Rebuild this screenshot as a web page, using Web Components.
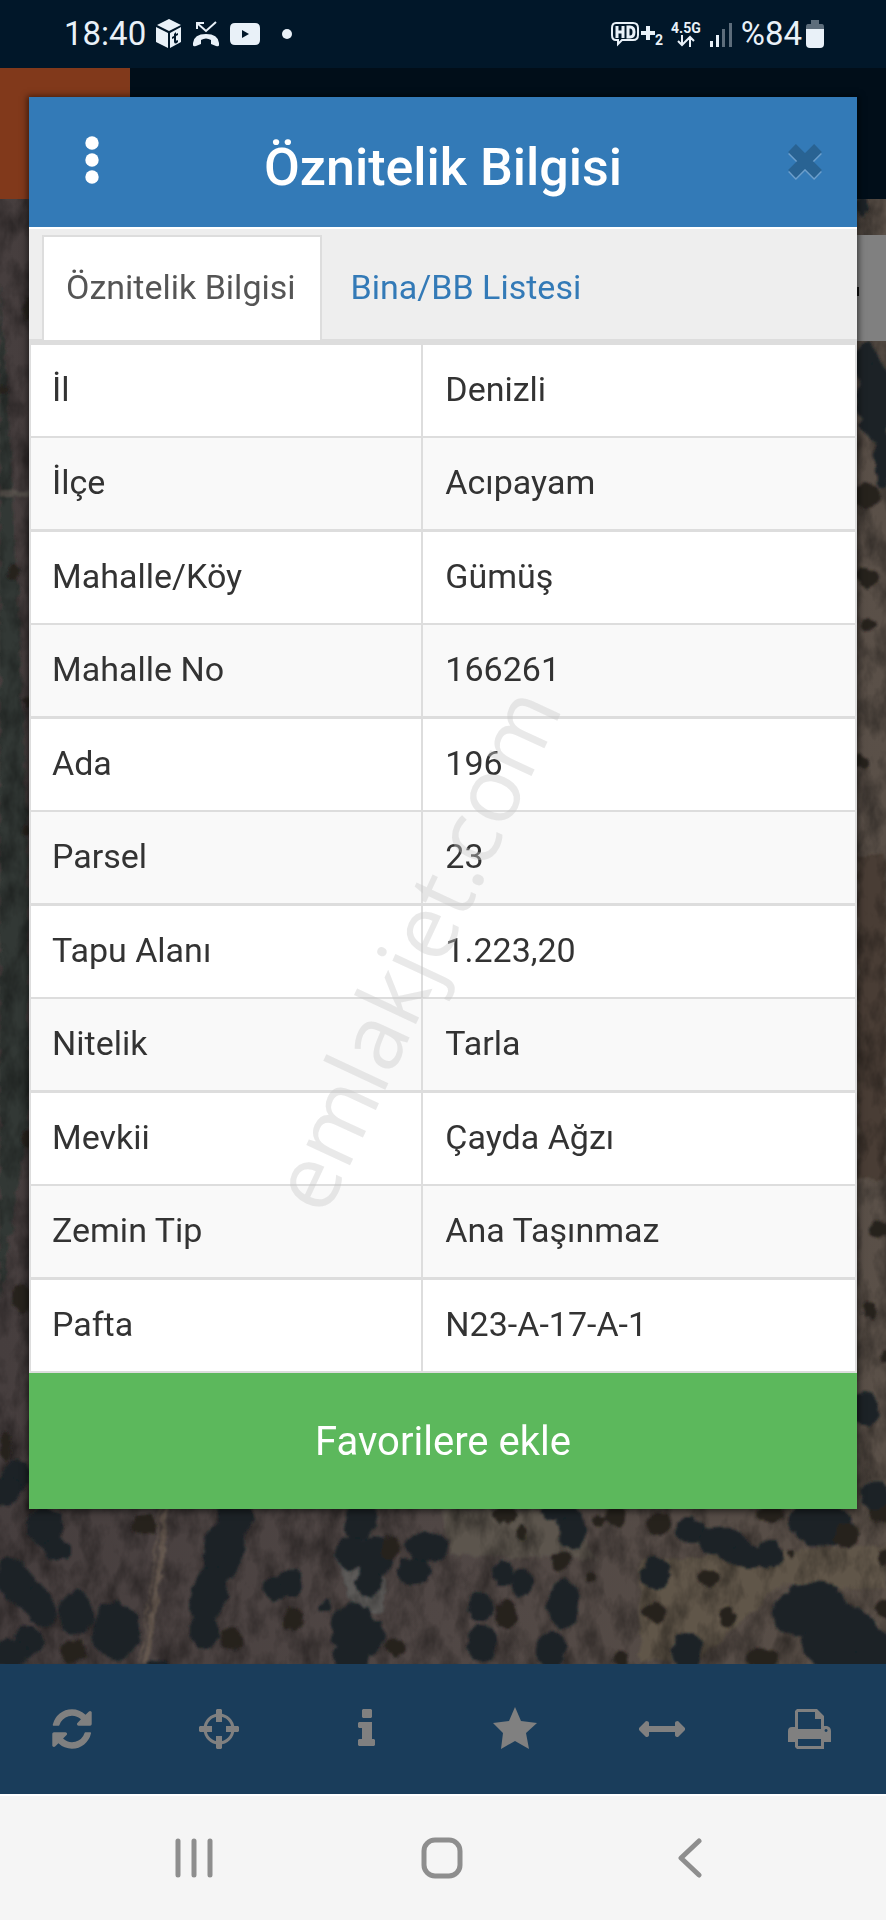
<!DOCTYPE html>
<html lang="tr">
<head>
<meta charset="utf-8">
<meta name="viewport" content="width=device-width, initial-scale=1">
<title>Öznitelik Bilgisi</title>
<style>
    body {
        margin: 0;
        font-family: Roboto, "Noto Sans", sans-serif;
    }
</style>
</head>
<body>
<parcel-app></parcel-app>

<script>
const define = (name, html, setup) => {
    const template = document.createElement('template')
    template.innerHTML = html
    customElements.define(name, class extends HTMLElement {
        constructor() {
            super()
            const shadow = this.attachShadow({mode: 'open'})
            shadow.appendChild(template.content.cloneNode(true))
            if (setup) setup(shadow, this)
        }
    })
}

// phone status bar
define('status-bar', `
    <style>
    :host {
        display: flex;
        align-items: center;
        justify-content: space-between;
        height: 68px;
        padding: 0 62px 0 64px;
        box-sizing: border-box;
        background: #011729;
        color: #e9f1f8;
        font-size: 33px;
        line-height: 40px;
    }
    div { display: flex; align-items: center; }
    svg { display: block; fill: currentColor; }
    .left { gap: 10px; }
    .right { gap: 8px; }
    .net {
        font: bold 14px/14px Roboto, sans-serif;
        flex-direction: column;
    }
    .sim { font: bold 14px/14px Roboto, sans-serif; align-self: flex-end; }
    .volte { gap: 0; }
    .battery { gap: 4px; }
    </style>
    <div class="left">
        <span>18:40</span>
        <svg width="26" height="30" viewBox="0 0 26 30">
            <path d="M13 0 25 6 13 12 1 6Z"/>
            <path d="M0 8 12 14V29L0 23Z"/>
            <path fill-rule="evenodd" d="M14 14 25 8V23L14 29ZM18 15v2l-2 1v2l2-1v4q1 3 4 0v-2q-2 1-2 0v-4l2-1v-2l-2 1v-2Z"/>
        </svg>
        <svg width="28" height="28" viewBox="0 0 28 28">
            <path d="M5 9V3h7M5 3l9 8L24 2" fill="none" stroke="currentColor" stroke-width="2"/>
            <path d="M1 23Q2 14 14 14T27 23V25Q27 27 24 26L19 24V20Q14 17 9 20V24L4 26Q1 27 1 25Z"/>
        </svg>
        <svg width="30" height="22" viewBox="0 0 30 22">
            <path fill-rule="evenodd" d="M5 0Q15-1 25 0Q30 0 30 5V17Q30 22 25 22Q15 23 5 22Q0 22 0 17V5Q0 0 5 0ZM12 7V15L19 11Z"/>
        </svg>
        <svg width="34" height="12" viewBox="0 0 34 12"><circle cx="17" cy="6" r="5"/></svg>
    </div>
    <div class="right">
        <div class="volte">
            <svg width="44" height="26" viewBox="0 0 44 26">
                <path d="M5 2H22Q27 2 27 7V14Q27 19 22 19H11L7 23V19H5Q1 19 1 14V7Q1 2 5 2Z" fill="none" stroke="currentColor" stroke-width="2"/>
                <path d="M6 5V17M12 5V17M6 11H12M17 6V16H19Q23 16 23 11T19 6Z" fill="none" stroke="currentColor" stroke-width="3"/>
                <path d="M35 5h4v5h5v4h-5v5h-4v-5h-5v-4h5Z"/>
            </svg>
            <span class="sim">2</span>
        </div>
        <div class="net">
            4.5G
            <svg width="18" height="12" viewBox="0 0 18 12">
                <path d="M5 0V10M1 6 5 10 9 6M13 12V2M9 6 13 2 17 6" fill="none" stroke="currentColor" stroke-width="2"/>
            </svg>
        </div>
        <svg width="24" height="26" viewBox="0 0 24 26">
            <path d="M1 20h3v6H1ZM7 14h3v12H7Z"/>
            <path d="M13 8h3v18h-3ZM20 2h3v24h-3Z" opacity=".4"/>
        </svg>
        <div class="battery">
            <span>%84</span>
            <svg width="18" height="28" viewBox="0 0 18 28">
                <path d="M5 0h8v4h3q2 0 2 3v2H0V7q0-3 2-3h3Z" opacity=".4"/>
                <path d="M0 9h18v15q0 4-4 4H4q-4 0-4-4Z"/>
            </svg>
        </div>
    </div>
`)

// darkened aerial photo behind the dialog: fields, tracks, trees
define('aerial-map', `
    <style>
    :host { display: block; overflow: hidden; contain: size; background: #453f3c; }
    svg { display: block; width: 100%; height: 100%; }
    </style>
    <svg viewBox="0 68 886 1596" preserveAspectRatio="xMidYMid slice" aria-hidden="true">
        <defs>
            <linearGradient id="soil">
                <stop offset="0" stop-color="#463e3e"/>
                <stop offset=".5" stop-color="#504745"/>
                <stop offset="1" stop-color="#5a5048"/>
            </linearGradient>
            <filter id="rough" x="-5%" y="-5%" width="110%" height="110%">
                <feTurbulence type="fractalNoise" baseFrequency=".08" numOctaves="3" seed="4"/>
                <feDisplacementMap in="SourceGraphic" scale="10" xChannelSelector="R" yChannelSelector="G"/>
                <feGaussianBlur stdDeviation="1"/>
            </filter>
            <filter id="grain" x="0" y="0" width="100%" height="100%">
                <feTurbulence type="fractalNoise" baseFrequency=".05 .03" numOctaves="4" seed="9"/>
                <feColorMatrix values="0 0 0 0 0  0 0 0 0 0  0 0 0 0 0  1.6 0 0 0 -.6"/>
            </filter>
        </defs>
        <rect y="68" width="886" height="1596" fill="url(#soil)"/>
        <g filter="url(#rough)">
            <path d="M0 280 8 400 22 690 29 900V1120L0 1300Z" fill="#303734"/>
            <path d="M0 494H30" stroke="#5b5651" stroke-width="6"/>
            <path d="M857 855H886V1180H857Z" fill="#4a3d36"/>
            <path d="M165 1500Q158 1580 143 1664" stroke="#655950" stroke-width="10" fill="none"/>
            <path d="M163 1500Q156 1580 141 1664" stroke="#4b4240" stroke-width="3" fill="none"/>
            <path d="M443 1510H560L600 1560 450 1555Z" fill="#5b544d"/>
            <path d="M640 1560 886 1545V1590L780 1585 700 1660H640Z" fill="#615649"/>
            <path d="M335 1555 350 1600 345 1625 385 1610 385 1580Z" fill="#5b5a59"/>
        </g>
        <rect y="68" width="886" height="1596" filter="url(#grain)" opacity=".5"/>
        <g id="trees" filter="url(#rough)"></g>
        <path d="M857 235H886V341H857Z" fill="#808080"/>
        <path d="M857 287H859V296H857Z" fill="#111"/>
    </svg>
`, shadow => {
    // cx, cy, rx, ry, rotation
    const trees = [
        [44,1527,18,20,0], [55,1549,14,11,0], [15,1582,18,26,-30], [38,1605,15,22,-25], [75,1612,17,22,0],
        [115,1630,24,28,0], [27,1640,15,16,0], [8,1654,18,14,0], [72,1650,13,11,1], [143,1523,13,10,1],
        [234,1514,18,22,0], [222,1552,20,32,12], [208,1594,18,30,10], [203,1630,15,18,0], [231,1638,12,11,1],
        [275,1588,13,12,0], [290,1581,12,14,0], [292,1618,10,11,1], [360,1520,16,20,25], [350,1552,16,16,0],
        [372,1557,18,22,0], [368,1582,12,14,0], [389,1547,10,12,1], [426,1546,20,16,0], [412,1570,16,14,0],
        [352,1628,22,26,0], [372,1635,12,18,0], [350,1655,18,18,0], [395,1646,10,9,1], [326,1605,6,5,0],
        [503,1514,12,10,1], [520,1531,7,7,1], [570,1527,14,22,0], [556,1508,16,10,0], [559,1560,9,9,1],
        [502,1573,11,13,0], [521,1582,10,14,0], [589,1576,5,5,1], [656,1524,12,11,1], [615,1515,11,10,1],
        [599,1520,6,6,1], [655,1573,15,16,0], [655,1611,12,10,1], [708,1577,12,9,1], [563,1603,16,24,0],
        [480,1605,13,14,0], [506,1614,12,14,1], [481,1642,13,19,0], [550,1648,15,20,0], [690,1530,15,12,0],
        [725,1544,28,15,15], [745,1555,16,14,0], [769,1553,14,14,0], [789,1553,3,4,1], [820,1523,32,22,10],
        [845,1534,12,12,1], [725,1617,8,11,1], [686,1650,15,20,0], [762,1658,16,10,1],
        [808,1608,38,26,-15], [840,1638,38,34,0], [874,1650,20,22,0], [884,1608,8,9,1], [770,1512,14,8,1],
        [620,1658,8,9,1], [155,1664,10,5,0], [883,1555,5,8,1], [880,1510,12,12,1],
        [27,308,5,10,1], [3,388,6,4,1], [12,572,6,7,1], [26,700,4,5,1], [27,830,4,6,1],
        [25,1138,6,7,1], [22,1298,11,14,1], [5,1445,6,14,1], [16,1474,14,15,0], [4,1490,16,14,0],
        [860,205,5,10,0], [864,362,12,22,0], [874,400,18,40,0], [882,455,8,32,0], [866,495,14,12,1],
        [866,576,11,10,1], [868,624,9,5,1], [860,760,6,8,1], [878,1228,10,9,1], [869,1310,8,9,1],
        [885,1355,4,6,1], [864,1408,14,16,0], [874,1494,14,14,0]
    ]
    const ns = 'http://www.w3.org/2000/svg'
    const group = shadow.getElementById('trees')
    trees.forEach(([cx, cy, rx, ry, kind]) => {
        const tree = document.createElementNS(ns, 'ellipse')
        tree.setAttribute('cx', cx + 1)
        tree.setAttribute('cy', cy + 1)
        tree.setAttribute('rx', rx)
        tree.setAttribute('ry', ry)
        // 1 marks the small, brownish ones, anything else is an angle
        tree.setAttribute('fill', kind === 1 ? '#26221f' : '#1a2327')
        if (kind !== 1) tree.setAttribute('transform', `rotate(${kind} ${cx} ${cy})`)
        group.appendChild(tree)
    })
})

define('site-header', `
    <style>
    :host { display: block; height: 131px; background: #010e19; }
    div { width: 130px; height: 131px; background: #81391b; }
    </style>
    <div></div>
`)

define('info-dialog', `
    <style>
    :host {
        display: block;
        background: #fff;
        box-shadow: 0 1px 6px 2px rgba(0, 0, 0, .5);
    }
    header {
        display: grid;
        grid-template-columns: 125px 1fr 125px;
        align-items: center;
        height: 130px;
        background: #337ab7;
        color: #fff;
    }
    h1 {
        margin: 0;
        padding-top: 12px;
        font-size: 52px;
        font-weight: 500;
        line-height: 60px;
        text-align: center;
    }
    button {
        display: grid;
        place-items: center;
        height: 68px;
        padding: 0 0 4px;
        border: 0;
        background: none;
        color: inherit;
    }
    .close {
        justify-items: end;
        padding: 0 34px 0 0;
    }
    svg { display: block; }
    </style>
    <header>
        <button aria-label="Menü">
            <svg width="14" height="48" viewBox="0 0 14 48" fill="#fff">
                <circle cx="7" cy="7" r="6.700"/><circle cx="7" cy="24" r="6.700"/><circle cx="7" cy="41" r="6.700"/>
            </svg>
        </button>
        <h1><slot name="title"></slot></h1>
        <button class="close" aria-label="Kapat">
            <svg width="36" height="38" viewBox="0 0 36 38" fill="none" stroke-width="11">
                <path d="M5 7 31 33M31 7 5 33" stroke="#6d9fcc"/>
                <path d="M5 5 31 31M31 5 5 31" stroke="#296393"/>
            </svg>
        </button>
    </header>
    <slot></slot>
`)

define('tab-strip', `
    <style>
    :host {
        display: flex;
        align-items: flex-end;
        height: 115px;
        padding: 0 13px;
        box-sizing: border-box;
        border-top: 2px solid #fff;
        border-bottom: 3px solid #ddd;
        background: #eee;
    }
    ::slotted(a) {
        padding: 29px 24px 32px 22px;
        border: 2px solid transparent;
        border-bottom: 0;
        margin: 0 5px -1px 0;
        color: #337ab7;
        font-size: 34px;
        line-height: 42px;
        text-decoration: none;
    }
    ::slotted(a[aria-selected="true"]) {
        border-color: #ddd;
        background: #fff;
        color: #555;
    }
    </style>
    <slot></slot>
`)

define('attribute-table', `
    <style>
    :host { display: block; }
    table {
        width: 100%;
        border-collapse: separate;
        border-spacing: 0;
        border-right: 2px solid #ddd;
        border-bottom: 2px solid #ddd;
        table-layout: fixed;
        color: #333;
        font-size: 34px;
        line-height: 43px;
    }
    col { width: calc(100% * 19 / 40); }
    col + col { width: calc(100% * 21 / 40); }
    th, td {
        padding: 23px 22px 25px;
        border-left: 2px solid #ddd;
        border-top: 2px solid #ddd;
        font-weight: 400;
        text-align: left;
    }
    th { padding-left: 21px; }
    tr:nth-child(odd) > * { border-top-width: 3px; }
    tr:nth-child(even) > * { background: #f9f9f9; }
    </style>
    <table><colgroup><col><col></colgroup><tbody></tbody></table>
`, shadow => {
    const rows = [
        ['İl', 'Denizli'],
        ['İlçe', 'Acıpayam'],
        ['Mahalle/Köy', 'Gümüş'],
        ['Mahalle No', '166261'],
        ['Ada', '196'],
        ['Parsel', '23'],
        ['Tapu Alanı', '1.223,20'],
        ['Nitelik', 'Tarla'],
        ['Mevkii', 'Çayda Ağzı'],
        ['Zemin Tip', 'Ana Taşınmaz'],
        ['Pafta', 'N23-A-17-A-1']
    ]
    shadow.querySelector('tbody').innerHTML = rows
        .map(([name, value]) => `<tr><th scope="row">${name}</th><td>${value}</td></tr>`)
        .join('')
})

define('favorite-button', `
    <style>
    :host { display: block; }
    button {
        display: block;
        width: 100%;
        height: 136px;
        padding: 2px 0 0;
        border: 0;
        background: #5cb85c;
        color: #fff;
        font: 400 40px/48px Roboto, sans-serif;
    }
    </style>
    <button><slot></slot></button>
`)

define('water-mark', `
    <style>
    :host {
        position: absolute;
        inset: 0;
        display: grid;
        place-items: center;
        padding: 0 60px 24px 0;
        pointer-events: none;
    }
    span {
        color: rgba(200, 200, 200, .4);
        font: 90px/90px "Open Sans", "Noto Sans", sans-serif;
        transform: rotate(-65deg);
    }
    </style>
    <span><slot></slot></span>
`)

define('tool-bar', `
    <style>
    :host {
        display: grid;
        grid-template-columns: repeat(6, 1fr);
        height: 130px;
        background: #1a3d5b;
    }
    button {
        display: grid;
        place-items: center;
        padding: 0 4px 0 0;
        border: 0;
        background: none;
        color: #808080;
    }
    svg { display: block; fill: currentColor; }
    </style>
    <button aria-label="Yenile">
        <svg width="40" height="46" viewBox="0 0 1536 1792"><path d="M1511 1056q0 5-1 7-64 268-268 434.500t-478 166.500q-146 0-282.500-55t-243.500-157l-129 129q-19 19-45 19t-45-19-19-45v-448q0-26 19-45t45-19h448q26 0 45 19t19 45-19 45l-137 137q71 66 161 102t187 36q134 0 250-65t186-179q11-17 53-117 8-23 30-23h192q13 0 22.500 9.500t9.500 22.500zm25-800v448q0 26-19 45t-45 19h-448q-26 0-45-19t-19-45 19-45l138-138q-148-137-349-137-134 0-250 65t-186 179q-11 17-53 117-8 23-30 23h-199q-13 0-22.500-9.500t-9.500-22.500v-7q65-268 270-434.500t480-166.500q146 0 284 55.500t245 156.500l130-129q19-19 45-19t45 19 19 45z"/></svg>
    </button>
    <button aria-label="Konum">
        <svg width="40" height="40" viewBox="0 0 40 40">
            <circle cx="20" cy="20" r="14" fill="none" stroke="currentColor" stroke-width="3"/>
            <path d="M18 0h4l1 1v12h-6V1ZM18 40h4l1-1V27h-6v12ZM0 18v4l1 1h12v-6H1ZM40 18v4l-1 1H27v-6h12Z"/>
        </svg>
    </button>
    <button aria-label="Bilgi">
        <svg width="18" height="40" viewBox="0 0 18 40">
            <path d="M5 0h8l1 1v7l-1 1H5L4 8V1ZM1 13h13v17h2l1 1v5l-1 1H1l-1-1v-5l1-1h3V19H1l-1-1v-4Z"/>
        </svg>
    </button>
    <button aria-label="Favoriler">
        <svg width="44" height="46" viewBox="0 0 44 46">
            <path d="M22 1 28 15 44 17 33 27 36 43 22 35 8 43 10 27 0 17 16 15Z"/>
        </svg>
    </button>
    <button aria-label="Ölçüm">
        <svg width="48" height="16" viewBox="0 0 48 16">
            <path d="M1 7 8 0q3 0 3 2v3h26V2q0-2 3-2l7 7v2l-7 7q-3 0-3-2v-3H11v3q0 2-3 2L1 9Z"/>
        </svg>
    </button>
    <button aria-label="Yazdır">
        <svg width="44" height="40" viewBox="0 0 44 40">
            <path fill-rule="evenodd" d="M9 0H29L36 7V17H39Q43 18 43 22V33H36V40H9L7 38V33H0V22Q0 18 4 18H7V2ZM10 3V20H33V10H27V3ZM10 30V37H33V30ZM38 20a1.500 1.500 0 1 0 .1 0Z"/>
        </svg>
    </button>
`)

define('system-nav', `
    <style>
    :host {
        display: flex;
        justify-content: center;
        height: 126px;
        box-sizing: border-box;
        border-top: 2px solid #fff;
        background: #f5f5f5;
    }
    button {
        display: grid;
        place-items: center;
        width: 28%;
        padding: 0 2px 0 0;
        border: 0;
        background: none;
        color: #8e8e8e;
    }
    svg { display: block; fill: none; stroke: currentColor; stroke-width: 5; stroke-linecap: round; stroke-linejoin: round; }
    </style>
    <button aria-label="Son uygulamalar">
        <svg width="38" height="40" viewBox="0 0 38 40"><path d="M3 3V37M19 3V37M35 3V37"/></svg>
    </button>
    <button aria-label="Ana ekran">
        <svg width="42" height="42" viewBox="0 0 42 42"><rect x="3" y="3" width="36" height="36" rx="11"/></svg>
    </button>
    <button aria-label="Geri">
        <svg width="24" height="40" viewBox="0 0 24 40"><path d="M21 3 3 20 21 37"/></svg>
    </button>
`)

define('parcel-app', `
    <style>
    :host {
        position: relative;
        display: flex;
        flex-direction: column;
        min-height: 100vh;
    }
    main {
        flex: 1;
        display: grid;
        grid-template-columns: 100%;
        align-items: start;
    }
    main > * { grid-area: 1 / 1; }
    aerial-map { align-self: stretch; }
    info-dialog { margin: 29px 29px 154px; }
    </style>
    <status-bar></status-bar>
    <main>
        <aerial-map></aerial-map>
        <site-header></site-header>
        <info-dialog role="dialog">
            <span slot="title">Öznitelik Bilgisi</span>
            <tab-strip role="tablist">
                <a href="#attributes" role="tab" aria-selected="true">Öznitelik Bilgisi</a>
                <a href="#buildings" role="tab" aria-selected="false">Bina/BB Listesi</a>
            </tab-strip>
            <attribute-table></attribute-table>
            <favorite-button>Favorilere ekle</favorite-button>
        </info-dialog>
    </main>
    <tool-bar></tool-bar>
    <system-nav></system-nav>
    <water-mark>emlakjet.com</water-mark>
`)
</script>
</body>
</html>
